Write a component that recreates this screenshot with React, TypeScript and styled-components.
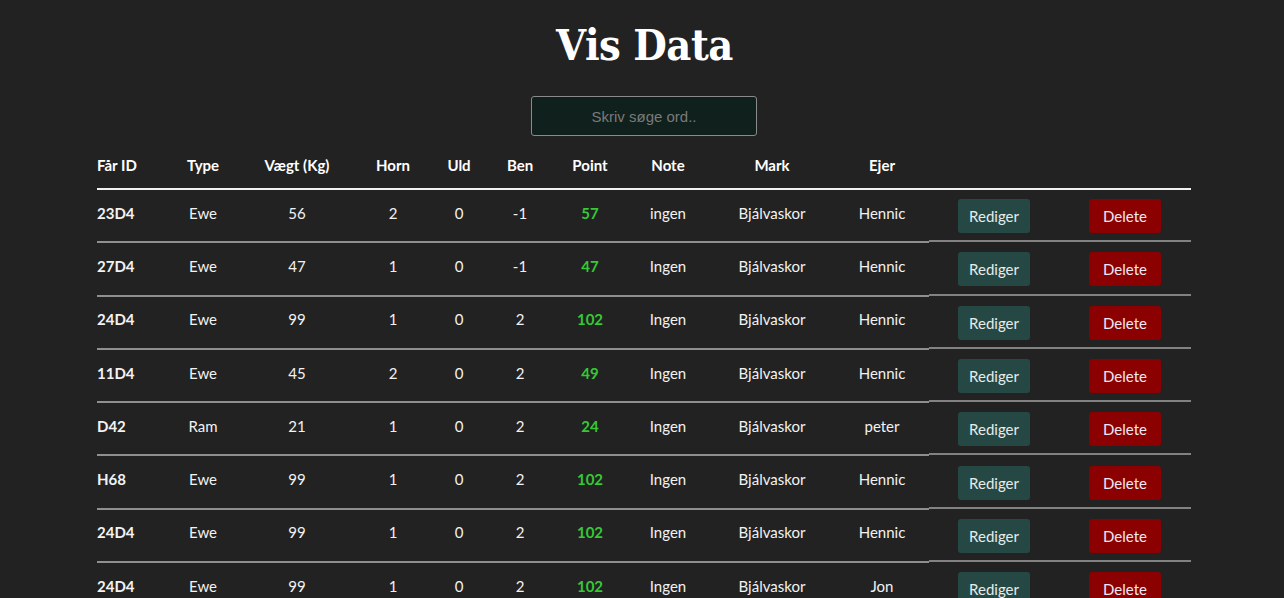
import React from "react";
import styled, { createGlobalStyle } from "styled-components";

const GlobalStyle = createGlobalStyle`
  html, body {
    margin: 0;
    padding: 0;
    background: #222222;
  }
  body {
    font-family: Lato, "Open Sans", sans-serif;
    color: #f2f2f2;
  }
  * { box-sizing: border-box; }
`;

const Page = styled.main`
  display: flex;
  flex-direction: column;
  align-items: center;
  padding-top: 17px;
`;

const Title = styled.h1`
  margin: 0 0 0 5px;
  font-family: "DejaVu Serif", serif;
  font-stretch: condensed;
  font-weight: 700;
  font-size: 43px;
  line-height: 56px;
  color: #ffffff;
  letter-spacing: -0.5px;
`;

const Search = styled.input`
  margin-top: 23px;
  margin-left: 4px;
  width: 226px;
  height: 40px;
  background: #10201c;
  border: 1px solid #8a8a8a;
  border-radius: 3px;
  color: #ddd;
  font-family: "Liberation Sans", Arial, sans-serif;
  font-size: 15px;
  text-align: center;
  outline: none;
  &::placeholder {
    color: #7a7a7a;
  }
`;

const Table = styled.div`
  margin-top: 8px;
  width: 1094px;
  margin-left: 4px;
`;

const cols = "70px 72px 116px 76px 56px 66px 74px 82px 126px 94px 130px 132px";

const HeaderRow = styled.div`
  display: grid;
  grid-template-columns: ${cols};
  border-bottom: 2px solid #f0f0f0;
`;

const HeadCell = styled.div<{ $left?: boolean }>`
  height: 44px;
  display: flex;
  align-items: center;
  justify-content: ${(p) => (p.$left ? "flex-start" : "center")};
  font-weight: 700;
  font-size: 15px;
  color: #ffffff;
  padding-bottom: 2px;
`;

const Row = styled.div`
  display: grid;
  grid-template-columns: ${cols};
`;

const Cell = styled.div<{ $left?: boolean; $bold?: boolean; $green?: boolean }>`
  height: 53.3px;
  display: flex;
  align-items: center;
  justify-content: ${(p) => (p.$left ? "flex-start" : "center")};
  border-bottom: 2px solid #8f8f8f;
  font-size: 15px;
  padding-bottom: 6px;
  font-weight: ${(p) => (p.$bold || p.$green ? 700 : 400)};
  color: ${(p) => (p.$green ? "#35c935" : "#f2f2f2")};
`;

const ActionCell = styled.div`
  height: 52.3px;
  margin-bottom: 1px;
  display: flex;
  align-items: center;
  justify-content: center;
  border-bottom: 2px solid #828282;
`;

const Button = styled.button<{ $danger?: boolean }>`
  width: 72px;
  height: 34px;
  border: none;
  border-radius: 3px;
  background: ${(p) => (p.$danger ? "#8b0000" : "#264845")};
  color: ${(p) => (p.$danger ? "#f0eaf4" : "#e6ecea")};
  font-family: Lato, "Open Sans", sans-serif;
  font-size: 15px;
  padding: 0;
  margin-top: 2px;
  cursor: pointer;
`;

type Sheep = {
  id: string;
  type: string;
  weight: number;
  horn: number;
  uld: number;
  ben: number;
  point: number;
  note: string;
  mark: string;
  owner: string;
};

const data: Sheep[] = [
  { id: "23D4", type: "Ewe", weight: 56, horn: 2, uld: 0, ben: -1, point: 57, note: "ingen", mark: "Bjálvaskor", owner: "Hennic" },
  { id: "27D4", type: "Ewe", weight: 47, horn: 1, uld: 0, ben: -1, point: 47, note: "Ingen", mark: "Bjálvaskor", owner: "Hennic" },
  { id: "24D4", type: "Ewe", weight: 99, horn: 1, uld: 0, ben: 2, point: 102, note: "Ingen", mark: "Bjálvaskor", owner: "Hennic" },
  { id: "11D4", type: "Ewe", weight: 45, horn: 2, uld: 0, ben: 2, point: 49, note: "Ingen", mark: "Bjálvaskor", owner: "Hennic" },
  { id: "D42", type: "Ram", weight: 21, horn: 1, uld: 0, ben: 2, point: 24, note: "Ingen", mark: "Bjálvaskor", owner: "peter" },
  { id: "H68", type: "Ewe", weight: 99, horn: 1, uld: 0, ben: 2, point: 102, note: "Ingen", mark: "Bjálvaskor", owner: "Hennic" },
  { id: "24D4", type: "Ewe", weight: 99, horn: 1, uld: 0, ben: 2, point: 102, note: "Ingen", mark: "Bjálvaskor", owner: "Hennic" },
  { id: "24D4", type: "Ewe", weight: 99, horn: 1, uld: 0, ben: 2, point: 102, note: "Ingen", mark: "Bjálvaskor", owner: "Jon" },
];

const headers = ["Får ID", "Type", "Vægt (Kg)", "Horn", "Uld", "Ben", "Point", "Note", "Mark", "Ejer", "", ""];

export default function App() {
  return (
    <>
      <GlobalStyle />
      <Page>
        <Title>Vis Data</Title>
        <Search placeholder="Skriv søge ord.." />
        <Table>
          <HeaderRow>
            {headers.map((h, i) => (
              <HeadCell key={i} $left={i === 0}>
                {h}
              </HeadCell>
            ))}
          </HeaderRow>
          {data.map((s, i) => (
            <Row key={i}>
              <Cell $left $bold>{s.id}</Cell>
              <Cell>{s.type}</Cell>
              <Cell>{s.weight}</Cell>
              <Cell>{s.horn}</Cell>
              <Cell>{s.uld}</Cell>
              <Cell>{s.ben}</Cell>
              <Cell $green>{s.point}</Cell>
              <Cell>{s.note}</Cell>
              <Cell>{s.mark}</Cell>
              <Cell>{s.owner}</Cell>
              <ActionCell>
                <Button>Rediger</Button>
              </ActionCell>
              <ActionCell>
                <Button $danger>Delete</Button>
              </ActionCell>
            </Row>
          ))}
        </Table>
      </Page>
    </>
  );
}
